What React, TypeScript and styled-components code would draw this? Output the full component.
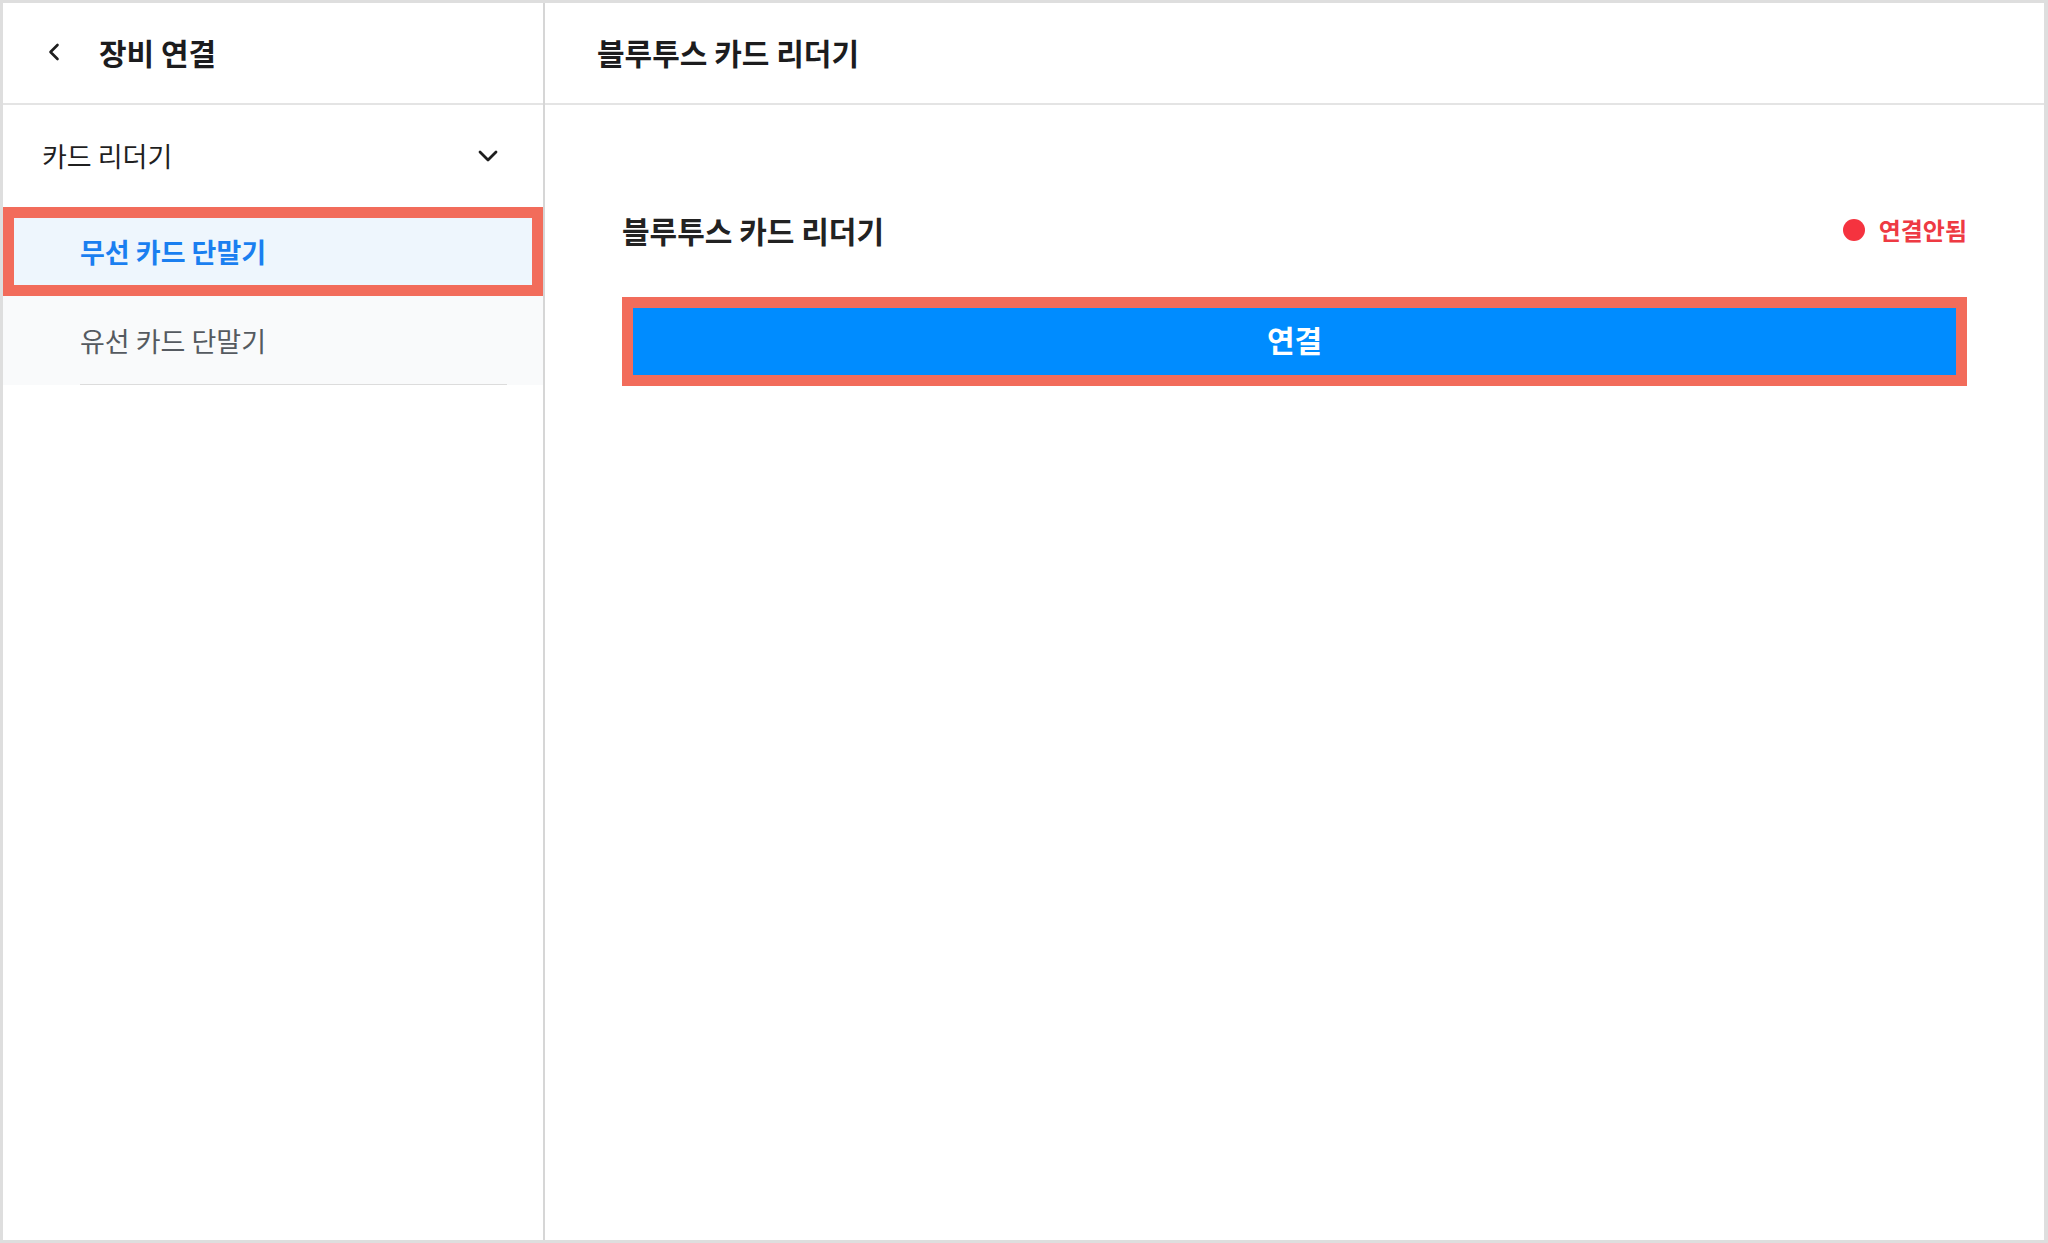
import React from "react";
import styled, { createGlobalStyle } from "styled-components";

const GlobalStyle = createGlobalStyle`
  html, body { margin: 0; padding: 0; background: #ffffff; }
  * { box-sizing: border-box; }
  body { font-family: "Noto Sans CJK KR", "Noto Sans", sans-serif; }
`;

const Frame = styled.div`
  width: 2048px;
  height: 1243px;
  border: 3px solid #dedede;
  border-right-width: 4px;
  display: flex;
  background: #ffffff;
`;

const Sidebar = styled.aside`
  width: 542px;
  flex: none;
  border-right: 2px solid #d6d6d6;
  display: flex;
  flex-direction: column;
`;

const Main = styled.main`
  flex: 1;
  display: flex;
  flex-direction: column;
`;

const Header = styled.header<{ $pad: number }>`
  height: 102px;
  flex: none;
  display: flex;
  align-items: center;
  padding-left: ${(p) => p.$pad}px;
  padding-bottom: 3px;
  border-bottom: 2px solid #e4e4e4;
  gap: 36px;
`;

const BackButton = styled.button`
  border: none;
  background: none;
  padding: 0;
  width: 18px;
  height: 24px;
  display: flex;
  align-items: center;
  justify-content: center;
  color: #1e1e1e;
  cursor: pointer;
`;

const HeaderTitle = styled.h1`
  margin: 0;
  font-size: 30px;
  line-height: 38px;
  font-weight: 700;
  color: #1c1c1e;
  letter-spacing: 0;
`;

const GroupRow = styled.div`
  height: 102px;
  flex: none;
  display: flex;
  align-items: center;
  justify-content: space-between;
  padding: 0 44px 0 39px;
`;

const GroupLabel = styled.span`
  font-size: 27px;
  line-height: 34px;
  font-weight: 400;
  color: #1f1f1f;
`;

const Chevron = styled.span`
  display: flex;
  color: #1e1e1e;
`;

const ItemList = styled.div`
  display: flex;
  flex-direction: column;
`;

const Item = styled.div<{ $active?: boolean }>`
  height: 89px;
  display: flex;
  align-items: center;
  padding-left: ${(p) => (p.$active ? 66 : 77)}px;
  background: ${(p) => (p.$active ? "#eef6fd" : "#f9fafb")};
  border: ${(p) => (p.$active ? "11px solid #f26c5b" : "none")};
  position: relative;
`;

const ItemLabel = styled.span<{ $active?: boolean }>`
  font-size: 27px;
  line-height: 34px;
  font-weight: ${(p) => (p.$active ? 700 : 400)};
  color: ${(p) => (p.$active ? "#1a7ff0" : "#555a60")};
`;

const ItemDivider = styled.div`
  position: absolute;
  left: 77px;
  right: 36px;
  bottom: 0;
  height: 1px;
  background: #dcdcdc;
`;

const Content = styled.section`
  padding: 105px 77px 0 77px;
  display: flex;
  flex-direction: column;
  gap: 47px;
`;

const TitleRow = styled.div`
  height: 40px;
  display: flex;
  align-items: center;
  justify-content: space-between;
`;

const ContentTitle = styled.h2`
  margin: 0;
  font-size: 30px;
  line-height: 38px;
  font-weight: 700;
  color: #222222;
`;

const Status = styled.div`
  display: flex;
  align-items: center;
  gap: 14px;
`;

const StatusDot = styled.span`
  width: 22px;
  height: 22px;
  border-radius: 50%;
  background: #f5333f;
`;

const StatusText = styled.span`
  font-size: 24px;
  line-height: 30px;
  font-weight: 700;
  color: #ee3a43;
`;

const Highlight = styled.div`
  border: 11px solid #f26c5b;
`;

const ConnectButton = styled.button`
  width: 100%;
  height: 67px;
  border: none;
  padding: 0 0 5px 0;
  background: #008cff;
  color: #ffffff;
  font-family: "Noto Sans CJK KR", "Noto Sans", sans-serif;
  font-size: 30px;
  font-weight: 700;
  display: flex;
  align-items: center;
  justify-content: center;
  cursor: pointer;
`;

export default function App() {
  return (
    <>
      <GlobalStyle />
      <Frame>
        <Sidebar>
          <Header $pad={42}>
            <BackButton aria-label="뒤로">
              <svg width="14" height="20" viewBox="0 0 14 20" fill="none">
                <path d="M10.5 3 L3.5 10 L10.5 17" stroke="currentColor" strokeWidth="2.6" strokeLinecap="round" strokeLinejoin="round" />
              </svg>
            </BackButton>
            <HeaderTitle>장비 연결</HeaderTitle>
          </Header>
          <GroupRow>
            <GroupLabel>카드 리더기</GroupLabel>
            <Chevron>
              <svg width="22" height="14" viewBox="0 0 22 14" fill="none">
                <path d="M3 3 L11 11 L19 3" stroke="currentColor" strokeWidth="2.8" strokeLinecap="round" strokeLinejoin="round" />
              </svg>
            </Chevron>
          </GroupRow>
          <ItemList>
            <Item $active>
              <ItemLabel $active>무선 카드 단말기</ItemLabel>
            </Item>
            <Item>
              <ItemLabel>유선 카드 단말기</ItemLabel>
              <ItemDivider />
            </Item>
          </ItemList>
        </Sidebar>
        <Main>
          <Header $pad={52}>
            <HeaderTitle>블루투스 카드 리더기</HeaderTitle>
          </Header>
          <Content>
            <TitleRow>
              <ContentTitle>블루투스 카드 리더기</ContentTitle>
              <Status>
                <StatusDot />
                <StatusText>연결안됨</StatusText>
              </Status>
            </TitleRow>
            <Highlight>
              <ConnectButton>연결</ConnectButton>
            </Highlight>
          </Content>
        </Main>
      </Frame>
    </>
  );
}
